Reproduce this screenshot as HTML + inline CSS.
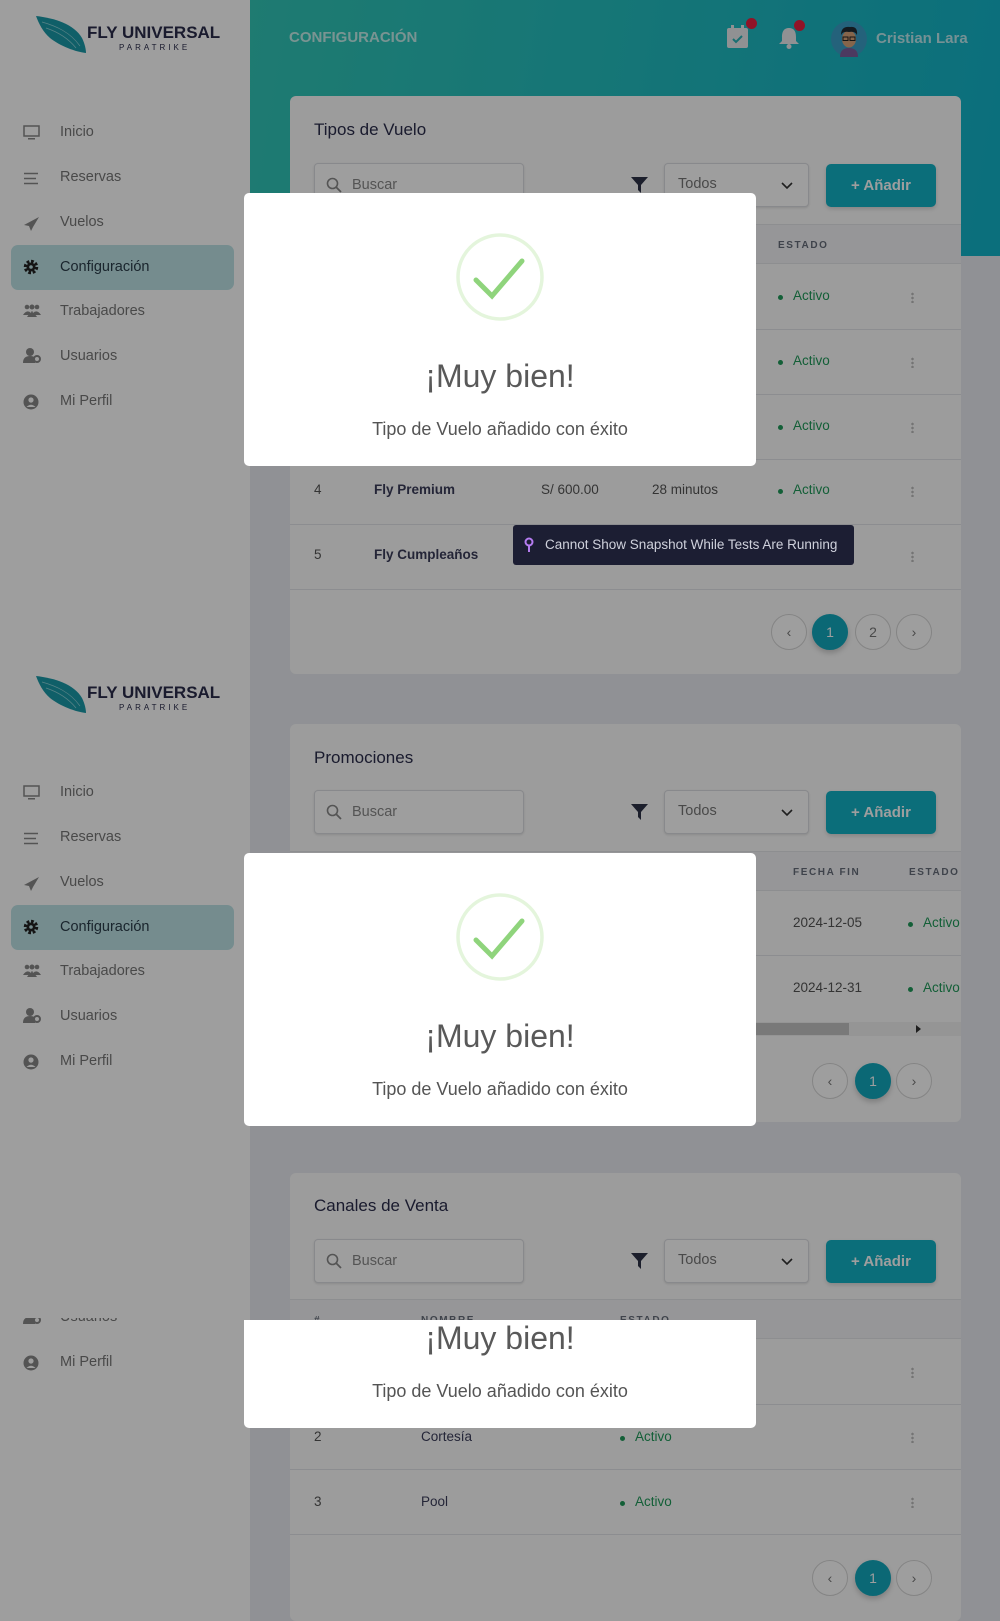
<!DOCTYPE html>
<html><head><meta charset="utf-8"><style>
*{box-sizing:border-box;margin:0;padding:0}
html,body{width:1000px;height:1621px;overflow:hidden}
body{position:relative;background:#e9ebf0;font-family:"Liberation Sans",sans-serif;color:#2b2d4f}
.a{position:absolute}
.side{left:0;width:250px;background:#fff}
.nav{position:absolute;left:60px;font-size:14.5px;color:#777}
.card{position:absolute;left:290px;width:671px;background:#fcfcfc;border-radius:6px;overflow:hidden}
.ttl{position:absolute;left:24px;font-size:17px;color:#2a2c4b}
.inp{position:absolute;left:24px;width:210px;height:44px;border:1px solid #dcdde2;border-radius:4px;background:#fff;box-shadow:0 1px 2px rgba(0,0,0,.12)}
.inp span{position:absolute;left:37px;top:13px;font-size:14.5px;color:#888}
.sel{position:absolute;left:374px;width:145px;height:44px;border:1px solid #dcdde2;border-radius:4px;background:#fff;box-shadow:0 1px 2px rgba(0,0,0,.12)}
.sel span{position:absolute;left:13px;top:12px;font-size:14.5px;color:#777}
.btn{position:absolute;left:536px;width:110px;height:43px;background:#13b2c6;border-radius:5px;color:#fff;font-weight:bold;font-size:15px;text-align:center;line-height:43px;box-shadow:0 2px 4px rgba(0,0,0,.15)}
.hd{position:absolute;left:0;width:671px;height:40px;background:#f2f3f6;border-top:1px solid #e4e5e9;border-bottom:1px solid #e4e5e9}
.th{position:absolute;font-size:10px;letter-spacing:1.6px;color:#666d7a;font-weight:bold}
.line{position:absolute;left:0;width:671px;height:1px;background:#e3e4e8}
.td{position:absolute;font-size:13.5px;color:#555}
.b{font-weight:bold;color:#3a3c5a}
.act{position:absolute;font-size:13.5px;color:#1f9a5a}
.act:before{content:"";position:absolute;left:-15px;top:7px;width:5px;height:5px;border-radius:50%;background:#1f9a5a}
.keb{position:absolute;width:3px;height:11px;background:radial-gradient(circle,#bbb 1.2px,transparent 1.4px) 0 0/3px 4px}
.pg{position:absolute;width:36px;height:36px;border-radius:50%;border:1px solid #d6d6d6;background:#fff;text-align:center;line-height:34px;font-size:14px;color:#777}
.pg.on{background:#13a9bd;border-color:#13a9bd;color:#fff;box-shadow:0 3px 6px rgba(0,0,0,.2)}
.ov{position:absolute;left:0;top:0;width:1000px;height:1621px;background:rgba(0,0,0,.38)}
.modal{position:absolute;left:244px;width:512px;background:#fff;border-radius:5px;text-align:center;overflow:hidden}
.mt{position:absolute;left:0;width:512px;font-size:32px;color:#595959}
.ms{position:absolute;left:0;width:512px;font-size:18px;color:#545454}
</style></head><body>

<div class="a side" style="top:0;height:1621px"></div>
<svg class="a" style="left:36px;top:16px" width="52" height="38" viewBox="0 0 52 38"><path d="M0 0 C18 2 38 8 46 22 C49 28 50 34 50 37 C40 36 24 30 14 22 C7 16 3 8 0 0Z" fill="#1a9aa8"/><path d="M6 6 C20 10 34 16 44 30 M10 12 C22 16 32 22 40 32" stroke="#8fd3da" stroke-width=".7" fill="none"/></svg>
<div class="a" style="left:87px;top:23px;font-size:17px;font-weight:bold;color:#2a2c4b">FLY UNIVERSAL</div>
<div class="a" style="left:119px;top:43px;font-size:8px;letter-spacing:3px;color:#2a2c4b">PARATRIKE</div>

<div class="a" style="left:11px;top:245px;width:223px;height:45px;background:#bde3e6;border-radius:7px"></div>
<div class="nav" style="top:124px">Inicio</div>
<div class="nav" style="top:169px">Reservas</div>
<div class="nav" style="top:214px">Vuelos</div>
<div class="nav" style="top:259px;color:#2a3c4a">Configuración</div>
<div class="nav" style="top:303px">Trabajadores</div>
<div class="nav" style="top:348px">Usuarios</div>
<div class="nav" style="top:393px">Mi Perfil</div>
<svg class="a" style="left:23px;top:125px" width="17" height="15"><rect x="1" y="1" width="15" height="10" fill="none" stroke="#888" stroke-width="1.5"/><rect x="5" y="13" width="7" height="1.5" fill="#888"/></svg>
<svg class="a" style="left:23px;top:172px" width="16" height="13"><path d="M1 1.5h14M1 6.5h12M1 11.5h14" stroke="#888" stroke-width="1.6"/></svg>
<svg class="a" style="left:23px;top:216px" width="17" height="16"><path d="M16 1 L1 9 L6 10 L8 15 L10 11 Z" fill="#888"/></svg>
<svg class="a" style="left:23px;top:259px" width="16" height="16"><circle cx="8" cy="8" r="5.5" fill="none" stroke="#222" stroke-width="3.5" stroke-dasharray="2.6 1.7"/><circle cx="8" cy="8" r="4.5" fill="#222"/><circle cx="8" cy="8" r="1.8" fill="#bde3e6"/></svg>
<svg class="a" style="left:23px;top:304px" width="18" height="13"><circle cx="4" cy="3" r="2.3" fill="#888"/><circle cx="9" cy="3" r="2.5" fill="#888"/><circle cx="14" cy="3" r="2.3" fill="#888"/><path d="M0 11 Q4 5 8 9 Q9 5 10 9 Q14 5 18 11Z M4 13 Q9 5 14 13Z" fill="#888"/></svg>
<svg class="a" style="left:23px;top:347px" width="18" height="16"><circle cx="7" cy="5" r="4" fill="#888"/><path d="M0 16 Q0 9 7 9 Q11 9 12 11 L12 16Z" fill="#888"/><circle cx="14" cy="12" r="3" fill="none" stroke="#888" stroke-width="2"/></svg>
<svg class="a" style="left:23px;top:394px" width="16" height="16"><circle cx="8" cy="8" r="7.5" fill="#888"/><circle cx="8" cy="6" r="2.6" fill="#fff"/><path d="M3.5 13 Q8 8.5 12.5 13" fill="#fff"/></svg>

<svg class="a" style="left:36px;top:676px" width="52" height="38" viewBox="0 0 52 38"><path d="M0 0 C18 2 38 8 46 22 C49 28 50 34 50 37 C40 36 24 30 14 22 C7 16 3 8 0 0Z" fill="#1a9aa8"/><path d="M6 6 C20 10 34 16 44 30 M10 12 C22 16 32 22 40 32" stroke="#8fd3da" stroke-width=".7" fill="none"/></svg>
<div class="a" style="left:87px;top:683px;font-size:17px;font-weight:bold;color:#2a2c4b">FLY UNIVERSAL</div>
<div class="a" style="left:119px;top:703px;font-size:8px;letter-spacing:3px;color:#2a2c4b">PARATRIKE</div>
<div class="a" style="left:11px;top:905px;width:223px;height:45px;background:#bde3e6;border-radius:7px"></div>
<div class="nav" style="top:784px">Inicio</div>
<div class="nav" style="top:829px">Reservas</div>
<div class="nav" style="top:874px">Vuelos</div>
<div class="nav" style="top:919px;color:#2a3c4a">Configuración</div>
<div class="nav" style="top:963px">Trabajadores</div>
<div class="nav" style="top:1008px">Usuarios</div>
<div class="nav" style="top:1053px">Mi Perfil</div>
<svg class="a" style="left:23px;top:785px" width="17" height="15"><rect x="1" y="1" width="15" height="10" fill="none" stroke="#888" stroke-width="1.5"/><rect x="5" y="13" width="7" height="1.5" fill="#888"/></svg>
<svg class="a" style="left:23px;top:832px" width="16" height="13"><path d="M1 1.5h14M1 6.5h12M1 11.5h14" stroke="#888" stroke-width="1.6"/></svg>
<svg class="a" style="left:23px;top:876px" width="17" height="16"><path d="M16 1 L1 9 L6 10 L8 15 L10 11 Z" fill="#888"/></svg>
<svg class="a" style="left:23px;top:919px" width="16" height="16"><circle cx="8" cy="8" r="5.5" fill="none" stroke="#222" stroke-width="3.5" stroke-dasharray="2.6 1.7"/><circle cx="8" cy="8" r="4.5" fill="#222"/><circle cx="8" cy="8" r="1.8" fill="#bde3e6"/></svg>
<svg class="a" style="left:23px;top:964px" width="18" height="13"><circle cx="4" cy="3" r="2.3" fill="#888"/><circle cx="9" cy="3" r="2.5" fill="#888"/><circle cx="14" cy="3" r="2.3" fill="#888"/><path d="M0 11 Q4 5 8 9 Q9 5 10 9 Q14 5 18 11Z M4 13 Q9 5 14 13Z" fill="#888"/></svg>
<svg class="a" style="left:23px;top:1007px" width="18" height="16"><circle cx="7" cy="5" r="4" fill="#888"/><path d="M0 16 Q0 9 7 9 Q11 9 12 11 L12 16Z" fill="#888"/><circle cx="14" cy="12" r="3" fill="none" stroke="#888" stroke-width="2"/></svg>
<svg class="a" style="left:23px;top:1054px" width="16" height="16"><circle cx="8" cy="8" r="7.5" fill="#888"/><circle cx="8" cy="6" r="2.6" fill="#fff"/><path d="M3.5 13 Q8 8.5 12.5 13" fill="#fff"/></svg>

<div class="a" style="left:0;top:1318px;width:250px;height:60px;overflow:hidden">
<div class="nav" style="top:-9px">Usuarios</div>
<svg class="a" style="left:23px;top:-10px" width="18" height="16"><circle cx="7" cy="5" r="4" fill="#888"/><path d="M0 16 Q0 9 7 9 Q11 9 12 11 L12 16Z" fill="#888"/><circle cx="14" cy="12" r="3" fill="none" stroke="#888" stroke-width="2"/></svg>
<div class="nav" style="top:36px">Mi Perfil</div>
<svg class="a" style="left:23px;top:37px" width="16" height="16"><circle cx="8" cy="8" r="7.5" fill="#888"/><circle cx="8" cy="6" r="2.6" fill="#fff"/><path d="M3.5 13 Q8 8.5 12.5 13" fill="#fff"/></svg>
</div>

<div class="a" style="left:250px;top:0;width:750px;height:256px;background:linear-gradient(100deg,#32c7b7,#12b3c9)"></div>
<div class="a" style="left:289px;top:29px;font-size:15px;font-weight:bold;color:rgba(255,255,255,.72)">CONFIGURACIÓN</div>
<svg class="a" style="left:727px;top:25px" width="21" height="23"><rect x="0" y="3" width="21" height="20" rx="2" fill="#e8eaee"/><rect x="4" y="0" width="3" height="5" fill="#e8eaee"/><rect x="14" y="0" width="3" height="5" fill="#e8eaee"/><path d="M6 14 l3 3 l6 -6" stroke="#2bb3b8" stroke-width="2" fill="none"/></svg>
<div class="a" style="left:746px;top:18px;width:11px;height:11px;border-radius:50%;background:#e8203f"></div>
<svg class="a" style="left:779px;top:27px" width="20" height="22"><path d="M10 1 C4 1 3 6 3 10 L3 14 L0 17 L20 17 L17 14 L17 10 C17 6 16 1 10 1Z" fill="#e8eaee"/><circle cx="10" cy="19.5" r="2.5" fill="#e8eaee"/></svg>
<div class="a" style="left:794px;top:20px;width:11px;height:11px;border-radius:50%;background:#e8203f"></div>
<svg class="a" style="left:831px;top:21px" width="36" height="36"><circle cx="18" cy="18" r="18" fill="#3b9fc7"/><path d="M9 36 Q9 27 18 27 Q27 27 27 36Z" fill="#7b5d9b"/><ellipse cx="18" cy="18" rx="7" ry="8.5" fill="#d8a479"/><path d="M10 14 Q10 5 19 6 Q27 5 26 14 Q24 10 18 11 Q12 10 10 14Z" fill="#1f2a33"/><rect x="12" y="16" width="5" height="3.5" fill="none" stroke="#222" stroke-width="1"/><rect x="19" y="16" width="5" height="3.5" fill="none" stroke="#222" stroke-width="1"/></svg>
<div class="a" style="left:876px;top:30px;font-size:15px;font-weight:bold;color:rgba(255,255,255,.72)">Cristian Lara</div>

<div class="card" style="top:96px;height:578px">
 <div class="ttl" style="top:24px">Tipos de Vuelo</div>
 <div class="inp" style="top:67px"><svg class="a" style="left:11px;top:13px" width="16" height="16"><circle cx="6.5" cy="6.5" r="5" fill="none" stroke="#888" stroke-width="1.6"/><path d="M10 10 l5 5" stroke="#888" stroke-width="1.8"/></svg><span>Buscar</span></div>
 <svg class="a" style="left:341px;top:81px" width="17" height="16"><path d="M0 0 H17 L10 8 V16 L7 13 V8Z" fill="#2e3348"/></svg>
 <div class="sel" style="top:67px"><span>Todos</span><svg class="a" style="left:116px;top:18px" width="12" height="8"><path d="M1 1 l5 5 l5 -5" stroke="#333" stroke-width="1.6" fill="none"/></svg></div>
 <div class="btn" style="top:68px">+ Añadir</div>
 <div class="hd" style="top:128px"></div>
 <div class="th" style="left:488px;top:144px">ESTADO</div>
 <div class="line" style="top:233px"></div><div class="line" style="top:298px"></div><div class="line" style="top:363px"></div><div class="line" style="top:428px"></div><div class="line" style="top:493px"></div>
 <div class="act" style="left:503px;top:192px">Activo</div><div class="keb" style="left:621px;top:196px"></div>
 <div class="act" style="left:503px;top:257px">Activo</div><div class="keb" style="left:621px;top:261px"></div>
 <div class="act" style="left:503px;top:322px">Activo</div><div class="keb" style="left:621px;top:326px"></div>
 <div class="td" style="left:24px;top:386px">4</div><div class="td b" style="left:84px;top:386px">Fly Premium</div><div class="td" style="left:251px;top:386px">S/ 600.00</div><div class="td" style="left:362px;top:386px">28 minutos</div><div class="act" style="left:503px;top:386px">Activo</div><div class="keb" style="left:621px;top:390px"></div>
 <div class="td" style="left:24px;top:451px">5</div><div class="td b" style="left:84px;top:451px">Fly Cumpleaños</div><div class="keb" style="left:621px;top:455px"></div>
 <div class="pg" style="left:481px;top:518px">&#8249;</div><div class="pg on" style="left:522px;top:518px">1</div><div class="pg" style="left:565px;top:518px">2</div><div class="pg" style="left:606px;top:518px">&#8250;</div>
</div>

<div class="card" style="top:724px;height:398px">
 <div class="ttl" style="top:24px">Promociones</div>
 <div class="inp" style="top:66px"><svg class="a" style="left:11px;top:13px" width="16" height="16"><circle cx="6.5" cy="6.5" r="5" fill="none" stroke="#888" stroke-width="1.6"/><path d="M10 10 l5 5" stroke="#888" stroke-width="1.8"/></svg><span>Buscar</span></div>
 <svg class="a" style="left:341px;top:80px" width="17" height="16"><path d="M0 0 H17 L10 8 V16 L7 13 V8Z" fill="#2e3348"/></svg>
 <div class="sel" style="top:66px"><span>Todos</span><svg class="a" style="left:116px;top:18px" width="12" height="8"><path d="M1 1 l5 5 l5 -5" stroke="#333" stroke-width="1.6" fill="none"/></svg></div>
 <div class="btn" style="top:67px">+ Añadir</div>
 <div class="hd" style="top:127px"></div>
 <div class="th" style="left:503px;top:143px">FECHA FIN</div><div class="th" style="left:619px;top:143px">ESTADO</div>
 <div class="line" style="top:231px"></div>
 <div class="td" style="left:503px;top:191px">2024-12-05</div><div class="act" style="left:633px;top:191px">Activo</div>
 <div class="td" style="left:503px;top:256px">2024-12-31</div><div class="act" style="left:633px;top:256px">Activo</div>
 <div class="a" style="left:0;top:298px;width:671px;height:14px;background:#f1f1f1"></div>
 <div class="a" style="left:0;top:299px;width:559px;height:12px;background:#c4c4c4"></div>
 <svg class="a" style="left:626px;top:301px" width="6" height="8"><path d="M0 0 L5 4 L0 8Z" fill="#333"/></svg>
 <div class="pg" style="left:522px;top:339px">&#8249;</div><div class="pg on" style="left:565px;top:339px">1</div><div class="pg" style="left:606px;top:339px">&#8250;</div>
</div>

<div class="card" style="top:1173px;height:448px">
 <div class="ttl" style="top:23px">Canales de Venta</div>
 <div class="inp" style="top:66px"><svg class="a" style="left:11px;top:13px" width="16" height="16"><circle cx="6.5" cy="6.5" r="5" fill="none" stroke="#888" stroke-width="1.6"/><path d="M10 10 l5 5" stroke="#888" stroke-width="1.8"/></svg><span>Buscar</span></div>
 <svg class="a" style="left:341px;top:80px" width="17" height="16"><path d="M0 0 H17 L10 8 V16 L7 13 V8Z" fill="#2e3348"/></svg>
 <div class="sel" style="top:66px"><span>Todos</span><svg class="a" style="left:116px;top:18px" width="12" height="8"><path d="M1 1 l5 5 l5 -5" stroke="#333" stroke-width="1.6" fill="none"/></svg></div>
 <div class="btn" style="top:67px">+ Añadir</div>
 <div class="hd" style="top:126px"></div>
 <div class="th" style="left:24px;top:142px">#</div><div class="th" style="left:131px;top:142px">NOMBRE</div><div class="th" style="left:330px;top:142px">ESTADO</div>
 <div class="line" style="top:231px"></div><div class="line" style="top:296px"></div><div class="line" style="top:361px"></div>
 <div class="keb" style="left:621px;top:194px"></div>
 <div class="td" style="left:24px;top:256px">2</div><div class="td b" style="left:131px;top:256px;font-weight:normal">Cortesía</div><div class="act" style="left:345px;top:256px">Activo</div><div class="keb" style="left:621px;top:259px"></div>
 <div class="td" style="left:24px;top:321px">3</div><div class="td b" style="left:131px;top:321px;font-weight:normal">Pool</div><div class="act" style="left:345px;top:321px">Activo</div><div class="keb" style="left:621px;top:324px"></div>
 <div class="pg" style="left:522px;top:387px">&#8249;</div><div class="pg on" style="left:565px;top:387px">1</div><div class="pg" style="left:606px;top:387px">&#8250;</div>
</div>

<div class="ov"></div>

<div class="modal" style="top:193px;height:273px">
 <svg class="a" style="left:212px;top:40px" width="88" height="88"><circle cx="44" cy="44" r="42" fill="none" stroke="#e4f5dc" stroke-width="3.5"/><path d="M20 47 L36 63 L66 28" stroke="#8fd47c" stroke-width="5" fill="none" stroke-linecap="round"/></svg>
 <div class="mt" style="top:165px">¡Muy bien!</div>
 <div class="ms" style="top:226px">Tipo de Vuelo añadido con éxito</div>
</div>
<div class="modal" style="top:853px;height:273px">
 <svg class="a" style="left:212px;top:40px" width="88" height="88"><circle cx="44" cy="44" r="42" fill="none" stroke="#e4f5dc" stroke-width="3.5"/><path d="M20 47 L36 63 L66 28" stroke="#8fd47c" stroke-width="5" fill="none" stroke-linecap="round"/></svg>
 <div class="mt" style="top:165px">¡Muy bien!</div>
 <div class="ms" style="top:226px">Tipo de Vuelo añadido con éxito</div>
</div>
<div class="modal" style="top:1320px;height:108px;border-radius:0 0 5px 5px">
 <div class="mt" style="top:0px">¡Muy bien!</div>
 <div class="ms" style="top:61px">Tipo de Vuelo añadido con éxito</div>
</div>

<div class="a" style="left:513px;top:525px;width:341px;height:40px;background:#1c1e33;border-radius:3px;color:#cfd1dc;font-size:13.5px;line-height:40px;padding-left:32px">Cannot Show Snapshot While Tests Are Running
 <svg class="a" style="left:11px;top:12px" width="10" height="16"><circle cx="5" cy="5" r="3.5" fill="none" stroke="#b57cf0" stroke-width="2"/><path d="M5 9 V15" stroke="#b57cf0" stroke-width="2"/></svg>
</div>
</body></html>
